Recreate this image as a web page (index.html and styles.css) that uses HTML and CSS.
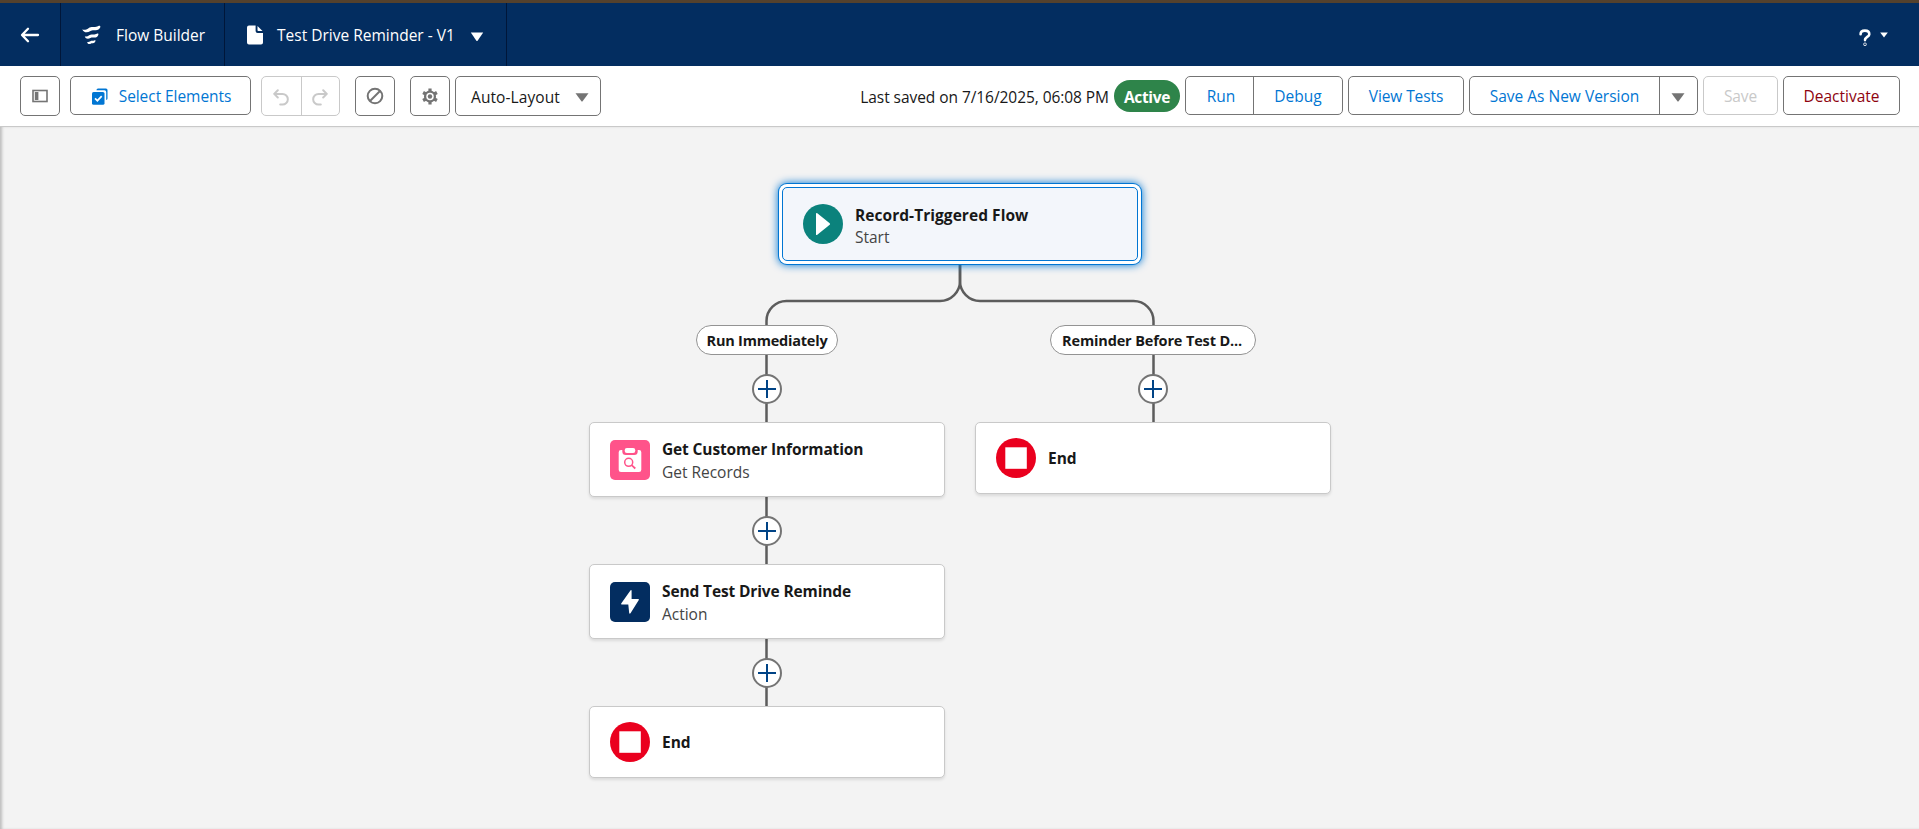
FILE: index.html
```html
<!DOCTYPE html>
<html lang="en">
<head>
<meta charset="utf-8">
<title>Flow Builder</title>
<link rel="stylesheet" href="styles.css">
</head>
<body>
<div class="strip"></div>
<header class="header">
  <div class="nav-back">
    <svg width="20" height="16" viewBox="0 0 20 16" fill="none" stroke="#fff" stroke-width="2.3" stroke-linecap="round" stroke-linejoin="round"><path d="M18 8H2.2M8 1.8L2 8l6 6.2"/></svg>
  </div>
  <div class="nav-app">
    <svg width="20" height="20" viewBox="0 0 20 20" fill="#fff"><path d="M.3 4.200C2 5.300 4.200 4.700 6.500 3.200C9 1.600 11 2.200 13 2.100C14.800 2 16 1.200 17 .8C18 .6 18.600 1.200 18.300 2.200C17.500 4.200 15.800 5.200 13.800 5.200C11.500 5.200 10 4.900 8 6.200C5.500 7.900 1.500 7.800 .3 4.200Z"/><path d="M2.800 11.200C4.200 11.900 5.700 11.300 7.200 10.200C9 8.900 10.800 9.700 12.400 9.600C13.700 9.500 14.600 8.900 15.400 8.600C16.300 8.400 16.700 9 16.300 9.900C15.500 11.700 14.300 12.500 12.700 12.500C11 12.500 9.900 12.100 8.400 13C6.300 14.200 3.500 14 2.800 11.200Z"/><path d="M5.200 16.900C6.300 17.400 7.300 17 8.400 16.300C9.700 15.500 10.700 16 11.500 15.800L12.700 15.300C13.400 15.100 13.700 15.600 13.400 16.300C12.900 17.500 12 18.200 11 18.200C10 18.200 9.600 18.100 8.700 18.700C7.300 19.600 5.500 18.900 5.200 16.900Z"/></svg>
    <span class="t-app">Flow Builder</span>
  </div>
  <div class="nav-flow">
    <svg width="16" height="20" viewBox="0 0 16 20" fill="#fff"><path d="M2 .5H8.600V6A2 2 0 0 0 10.600 8H16V17.500A2 2 0 0 1 14 19.500H2A2 2 0 0 1 0 17.500V2.500A2 2 0 0 1 2 .5Z"/><path d="M10.500 1L15.500 6H11.300A.8.8 0 0 1 10.500 5.200Z"/></svg>
    <span class="t-flow">Test Drive Reminder - V1</span>
    <svg class="caret" width="14" height="10" viewBox="0 0 14 10" fill="#fff"><path d="M.8 .5H13.200L7.600 8.700Q7 9.400 6.400 8.700Z"/></svg>
  </div>
  <div class="nav-help">
    <svg width="12" height="17" viewBox="0 0 12 17" fill="none" stroke="#fff" stroke-width="2.600" stroke-linecap="round"><path d="M1.600 5.200C1.600 2.900 3.400 1.600 5.900 1.600C8.500 1.600 10.300 3.100 10.300 5.200C10.300 8 6 7.900 6 11.100"/><circle cx="6" cy="15.200" r=".4"/></svg>
    <svg width="8" height="6" viewBox="0 0 8 6" fill="#fff"><path d="M.2 .5H7.800L4 5.500Z"/></svg>
  </div>
</header>
<div class="toolbar">
  <div class="btn square">
    <svg width="16" height="14" viewBox="0 0 16 14"><rect x="1" y="1.500" width="14" height="11" fill="none" stroke="#747474" stroke-width="1.600"/><rect x="2.800" y="3" width="3.600" height="8" fill="#747474"/></svg>
  </div>
  <div class="btn select-elements">
    <svg width="16" height="17" viewBox="0 0 16 17"><path d="M4.500 2.300V2A1.500 1.500 0 0 1 6 .5H14A1.500 1.500 0 0 1 15.500 2V10.500A1.500 1.500 0 0 1 14.200 12V4A1.700 1.700 0 0 0 12.500 2.300Z" fill="#0176d3"/><rect x="0" y="4" width="12.500" height="12.800" rx="1.600" fill="#0176d3"/><path d="M3 10.300L5.400 12.700L9.700 8.200" fill="none" stroke="#fff" stroke-width="1.700"/></svg>
    <span class="t-select">Select Elements</span>
  </div>
  <div class="group undo-redo">
    <div class="seg"><svg width="16" height="17" viewBox="0 0 16 17" fill="none" stroke="#c9c9c9" stroke-width="2" stroke-linecap="round" stroke-linejoin="round"><path d="M4.800 1.300L1.200 4.900L4.800 8.500M1.500 4.900H9.500A5 5 0 0 1 9.500 15.600H7.200"/></svg></div>
    <div class="seg"><svg width="16" height="17" viewBox="0 0 16 17" fill="none" stroke="#c9c9c9" stroke-width="2" stroke-linecap="round" stroke-linejoin="round"><path d="M11.200 1.300L14.800 4.900L11.200 8.500M14.500 4.900H6.500A5 5 0 0 0 6.500 15.600H8.800"/></svg></div>
  </div>
  <div class="btn square ban">
    <svg width="18" height="18" viewBox="0 0 18 18" fill="none" stroke="#747474" stroke-width="2"><circle cx="9" cy="9" r="7.300"/><path d="M4 14L14 4"/></svg>
  </div>
  <div class="btn square gear">
    <svg width="16" height="17" viewBox="0 0 16 17" fill="none" stroke="#747474"><circle cx="8" cy="8.500" r="4.900" stroke-width="2.300"/><circle cx="8" cy="8.500" r="2.200" fill="#747474" stroke="none"/><path d="M8 .6V3.500M8 13.500V16.400M1.100 4.500L3.700 6M12.300 11L14.900 12.500M1.100 12.500L3.700 11M12.300 6L14.900 4.500" stroke-width="3.200"/></svg>
  </div>
  <div class="btn layout">
    <span class="t-layout">Auto-Layout</span>
    <svg width="14" height="9" viewBox="0 0 14 9" fill="#747474"><path d="M.5 .3H13.500L7.600 8.200Q7 8.800 6.400 8.200Z"/></svg>
  </div>
  <div class="spacer"></div>
  <span class="saved">Last saved on 7/16/2025, 06:08 PM</span>
  <span class="badge">Active</span>
  <div class="group blue run-debug"><div class="seg"><span class="t-run">Run</span></div><div class="seg"><span class="t-debug">Debug</span></div></div>
  <div class="btn blue tests"><span class="t-tests">View Tests</span></div>
  <div class="group blue save-as"><div class="seg"><span class="t-saveas">Save As New Version</span></div><div class="seg arrow"><svg width="14" height="9" viewBox="0 0 14 9" fill="#747474"><path d="M.5 .3H13.500L7.600 8.200Q7 8.800 6.400 8.200Z"/></svg></div></div>
  <div class="btn save"><span class="t-save">Save</span></div>
  <div class="btn deactivate"><span class="t-deact">Deactivate</span></div>
</div>
<main class="canvas">
  <svg class="wires" width="1919" height="702" viewBox="0 127 1919 702" fill="none" stroke="#5c5c5c" stroke-width="2.500">
    <path d="M960 265V281A20 20 0 0 1 940 301H787A20 20 0 0 0 766.500 321V706"/>
    <path d="M960 265V281A20 20 0 0 0 980 301H1133.500A20 20 0 0 1 1153.500 321V422"/>
  </svg>
  <div class="node start">
    <svg class="icon" width="40" height="40" viewBox="0 0 40 40"><circle cx="20" cy="20" r="20" fill="#0b827c"/><path d="M13 9.800Q13 8.300 14.300 9.300L26.700 19.200Q27.500 20 26.700 20.800L14.300 30.700Q13 31.700 13 30.200Z" fill="#fff"/></svg>
    <div class="label"><b class="n-start">Record-Triggered Flow</b><span class="s-start">Start</span></div>
  </div>
  <div class="pill immediate"><span class="p-imm">Run Immediately</span></div>
  <div class="pill reminder"><span class="p-rem">Reminder Before Test D...</span></div>
  <div class="plus a1"></div>
  <div class="plus a2"></div>
  <div class="plus a3"></div>
  <div class="plus b1"></div>
  <div class="node get">
    <svg class="icon" width="40" height="40" viewBox="0 0 40 40"><rect width="40" height="40" rx="5" fill="#ff538a"/><path d="M11 10H12.300V11.500A3.500 3.500 0 0 0 15.800 15H24.200A3.500 3.500 0 0 0 27.700 11.500V10H29A2.300 2.300 0 0 1 31.300 12.300V29.700A2.300 2.300 0 0 1 29 32H11A2.300 2.300 0 0 1 8.700 29.700V12.300A2.300 2.300 0 0 1 11 10Z" fill="#fff"/><rect x="14.700" y="8" width="10.600" height="5" rx="2.200" fill="#fff"/><circle cx="18.700" cy="22.300" r="4" fill="none" stroke="#ff538a" stroke-width="1.500"/><path d="M21.600 25.200L25.300 28.500" stroke="#ff538a" stroke-width="1.700"/></svg>
    <div class="label"><b class="n-get">Get Customer Information</b><span class="s-get">Get Records</span></div>
  </div>
  <div class="node send">
    <svg class="icon" width="40" height="40" viewBox="0 0 40 40"><rect width="40" height="40" rx="5" fill="#032d60"/><path d="M20.600 8.300L11.200 21.500Q10.700 22.500 11.800 22.500H18.300L19.200 31Q19.600 32.400 20.500 31.300L28.800 18Q29.300 17 28.200 17H21.600V8.600Q21.300 7.500 20.600 8.300Z" fill="#fff"/></svg>
    <div class="label"><b class="n-send">Send Test Drive Reminde</b><span class="s-send">Action</span></div>
  </div>
  <div class="node end end-a">
    <svg class="icon" width="40" height="40" viewBox="0 0 40 40"><circle cx="20" cy="20" r="20" fill="#ea001e"/><rect x="9.300" y="9.300" width="21.500" height="21.500" fill="#fff"/></svg>
    <div class="label"><b class="n-end">End</b></div>
  </div>
  <div class="node end end-b">
    <svg class="icon" width="40" height="40" viewBox="0 0 40 40"><circle cx="20" cy="20" r="20" fill="#ea001e"/><rect x="9.300" y="9.300" width="21.500" height="21.500" fill="#fff"/></svg>
    <div class="label"><b class="n-end">End</b></div>
  </div>
</main>
</body>
</html>
```
FILE: styles.css
```css
* { box-sizing: border-box; }
body {
  margin: 0;
  height: 829px;
  overflow: hidden;
  display: flex;
  flex-direction: column;
  font-family: "Open Sans", "Noto Sans", sans-serif;
  font-size: 15.5px;
  color: #181818;
  white-space: nowrap;
}
svg { display: block; flex: none; }

.strip { height: 3px; background: #54412d; flex: none; }
.header { height: 63px; flex: none; display: flex; background: #032d60; color: #fff; }
.header > div { display: flex; align-items: center; }
.nav-back { width: 61px; border-right: 1px solid #001639; padding-left: 20px; }
.nav-app { width: 164px; border-right: 1px solid #001639; padding-left: 21px; gap: 14px; }
.nav-flow { width: 282px; border-right: 1px solid #001639; padding-left: 22px; }
.nav-flow .t-flow { width: 193px; margin-left: 14px; }
.t-app, .t-flow { padding-top: 1px; }
.nav-flow .caret { margin-top: 5px; }
.nav-help { margin-left: auto; padding: 5px 31px 0 0; gap: 9px; }
.nav-help svg:last-child { margin-top: -4px; }

.toolbar {
  height: 61px;
  flex: none;
  display: flex;
  align-items: flex-start;
  padding: 10px 19px 0 20px;
  background: #fff;
  border-bottom: 1px solid #c9c9c9;
}
.spacer { flex: 1; }
.btn, .group { height: 39px; flex: none; border: 1px solid #747474; border-radius: 5px; display: flex; background: #fff; }
.btn { align-items: center; justify-content: center; }
.seg { display: flex; align-items: center; justify-content: center; flex: none; }
.seg + .seg { border-left: 1px solid #747474; flex: 1; }
.btn span, .seg span { padding-top: 1px; }
.square { width: 40px; height: 40px; }
.select-elements { width: 181px; margin-left: 10px; gap: 11px; padding-left: 2px; color: #0176d3; letter-spacing: -.06px; }
.select-elements svg { margin-top: 2px; }
.undo-redo { width: 79px; height: 40px; margin-left: 10px; border-color: #c9c9c9; }
.undo-redo .seg:first-child { width: 39px; padding-right: 1px; }
.undo-redo .seg + .seg { border-color: #c9c9c9; padding-right: 2px; }
.undo-redo svg { margin-top: 2px; }
.ban, .gear { margin-left: 15px; }
.layout { width: 146px; height: 40px; margin-left: 5px; justify-content: space-between; padding: 0 11px 0 15px; letter-spacing: .08px; }
.layout svg { margin-top: 3px; }
.saved { line-height: 43px; letter-spacing: -.06px; }
.badge {
  width: 66px;
  height: 32px;
  margin: 4px 5px 0 5px;
  border-radius: 16px;
  background: #2e844a;
  color: #fff;
  font-weight: 700;
  line-height: 34px;
  text-align: center;
  letter-spacing: -.35px;
}
.blue { color: #0176d3; }
.run-debug { width: 158px; }
.run-debug .seg:first-child { width: 67px; padding-left: 3px; }
.tests { width: 116px; margin-left: 5px; letter-spacing: -.1px; }
.save-as { width: 229px; margin-left: 5px; }
.save-as .seg:first-child { width: 189px; }
.arrow svg { margin: 3px 2px 0 0; }
.save { width: 75px; margin-left: 5px; color: #c9c9c9; border-color: #c9c9c9; letter-spacing: -.15px; }
.deactivate { width: 117px; margin-left: 5px; color: #8e030f; }

/* Free-form flow canvas */
.canvas { position: relative; flex: 1; background: #f3f3f3; box-shadow: inset 3px 0 3px -1px #bdbdbd; }
.wires { position: absolute; left: 0; top: 0; }
.node {
  position: absolute;
  width: 356px;
  height: 75px;
  display: flex;
  align-items: center;
  gap: 12px;
  padding: 0 20px;
  background: #fff;
  border: 1px solid #c9c9c9;
  border-radius: 5px;
  box-shadow: 0 2px 3px rgba(0, 0, 0, .1);
}
.label { display: flex; flex-direction: column; line-height: 23px; padding-top: 2px; letter-spacing: -.02px; }
.label span { color: #444; }
.n-get, .n-send { letter-spacing: -.13px; }
.n-start { letter-spacing: .05px; }
.start {
  left: 782px;
  top: 60px;
  height: 74px;
  background: #f3f6fb;
  border-color: #0176d3;
  box-shadow: 0 0 0 3px #fff, 0 0 0 4px #0176d3, 0 0 9px 4px #0176d3;
}
.start .label { line-height: 22px; padding-top: 3px; }
.get { left: 589px; top: 295px; }
.send { left: 589px; top: 437px; }
.end { height: 72px; }
.end .label { padding-top: 1px; }
.end-a { left: 589px; top: 579px; }
.end-b { left: 975px; top: 295px; }

.pill {
  position: absolute;
  top: 198px;
  height: 30px;
  border: 1px solid #939393;
  border-radius: 15px;
  background: #fff;
  font-size: 14.5px;
  font-weight: 700;
  display: flex;
  align-items: center;
  justify-content: center;
  padding-top: 1px;
}
.immediate { left: 696px; width: 142px; letter-spacing: -.22px; }
.reminder { left: 1050px; width: 206px; padding-right: 2px; letter-spacing: -.15px; }

.plus {
  position: absolute;
  width: 30px;
  height: 30px;
  border: 2px solid #747474;
  border-radius: 50%;
  background:
    linear-gradient(#014486, #014486) center / 18px 2px no-repeat,
    linear-gradient(#014486, #014486) center / 2px 18px no-repeat,
    #fff;
}
.a1 { left: 752px; top: 247px; }
.a2 { left: 752px; top: 389px; }
.a3 { left: 752px; top: 531px; }
.b1 { left: 1138px; top: 247px; }
```
